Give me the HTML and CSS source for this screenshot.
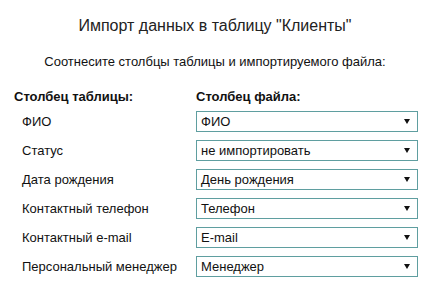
FILE: index.html
```html
<!DOCTYPE html>
<html>
<head lang="ru">
    <meta charset="UTF-8">
    <title>Импорт данных</title>
    <link rel="stylesheet" href="styles.css">
</head>
<body>
    <div class="import">
        <h1 class="import-title">Импорт данных в таблицу "Клиенты"</h1>
        <p class="import-hint">Соотнесите столбцы таблицы и импортируемого файла:</p>
        <div class="map" id="map">
            <div class="map-head">Столбец таблицы:</div>
            <div class="map-head">Столбец файла:</div>

            <div class="map-label">ФИО</div>
            <div class="pick"><span>ФИО</span><svg class="pick-arrow" width="6" height="5" viewBox="0 0 6 5"><polygon points="0,0 6,0 3,5"/></svg></div>

            <div class="map-label">Статус</div>
            <div class="pick"><span>не импортировать</span><svg class="pick-arrow" width="6" height="5" viewBox="0 0 6 5"><polygon points="0,0 6,0 3,5"/></svg></div>

            <div class="map-label">Дата рождения</div>
            <div class="pick"><span>День рождения</span><svg class="pick-arrow" width="6" height="5" viewBox="0 0 6 5"><polygon points="0,0 6,0 3,5"/></svg></div>

            <div class="map-label">Контактный телефон</div>
            <div class="pick"><span>Телефон</span><svg class="pick-arrow" width="6" height="5" viewBox="0 0 6 5"><polygon points="0,0 6,0 3,5"/></svg></div>

            <div class="map-label">Контактный e-mail</div>
            <div class="pick"><span>E-mail</span><svg class="pick-arrow" width="6" height="5" viewBox="0 0 6 5"><polygon points="0,0 6,0 3,5"/></svg></div>

            <div class="map-label">Персональный менеджер</div>
            <div class="pick"><span>Менеджер</span><svg class="pick-arrow" width="6" height="5" viewBox="0 0 6 5"><polygon points="0,0 6,0 3,5"/></svg></div>
        </div>
    </div>
</body>
</html>
```

FILE: styles.css
```css
*{
    margin:0;  padding:0;
    box-sizing: border-box;
}
body{
    background:#fff;
    color:#111;
    font-family: "Liberation Sans", Arial, sans-serif;
    font-size:13px;
}
.import{
    width:430px;
    padding:16px 0 0 14px;
}
.import-title{
    font-size:16px;
    font-weight: normal;
    line-height:19px;
    text-align: center;
    padding-right:14px;
    color:#222;
}
.import-hint{
    margin-top:19px;
    line-height:15px;
    text-align: center;
    padding-right:14px;
}
.map{
    display: grid;
    grid-template-columns: 182px 222px;
    grid-template-rows: 14px;
    grid-auto-rows: 21px;
    row-gap:8px;
    margin-top:20px;
}
.map-head{
    font-weight: bold;
    line-height:15px;
}
.map-label{
    padding-left:8px;
    line-height:21px;
}
.pick{
    display: flex;
    align-items: center;
    justify-content: space-between;
    border:1px solid #5f9ea0;
    padding:0 7px 0 4px;
    line-height:19px;
    background:#fff;
}
.pick-arrow{
    fill:#111;
}
```
